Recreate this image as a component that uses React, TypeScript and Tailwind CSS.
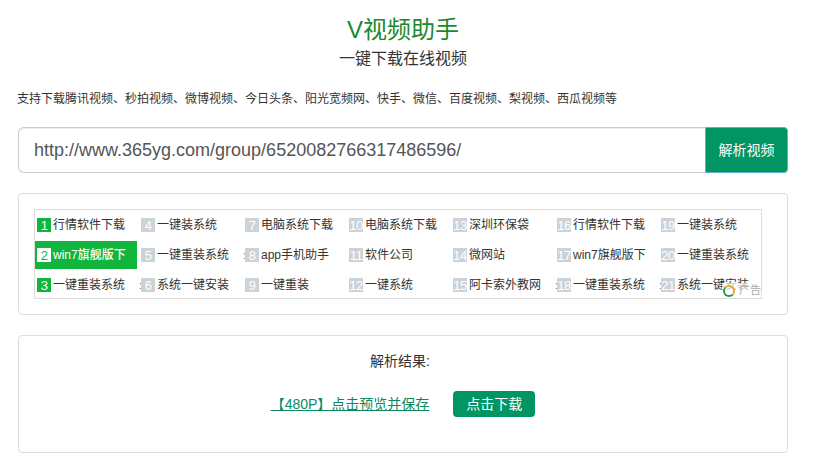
const columns = [
  [
    { n: 1, text: '行情软件下载', hot: true },
    { n: 2, text: 'win7旗舰版下', hot: true, active: true },
    { n: 3, text: '一键重装系统', hot: true, tail: true },
  ],
  [
    { n: 4, text: '一键装系统' },
    { n: 5, text: '一键重装系统', tail: true },
    { n: 6, text: '系统一键安装' },
  ],
  [
    { n: 7, text: '电脑系统下载' },
    { n: 8, text: 'app手机助手' },
    { n: 9, text: '一键重装' },
  ],
  [
    { n: 10, text: '电脑系统下载' },
    { n: 11, text: '软件公司' },
    { n: 12, text: '一键系统' },
  ],
  [
    { n: 13, text: '深圳环保袋' },
    { n: 14, text: '微网站' },
    { n: 15, text: '阿卡索外教网', tail: true },
  ],
  [
    { n: 16, text: '行情软件下载' },
    { n: 17, text: 'win7旗舰版下' },
    { n: 18, text: '一键重装系统', tail: true },
  ],
  [
    { n: 19, text: '一键装系统' },
    { n: 20, text: '一键重装系统' },
    { n: 21, text: '系统一键安装' },
  ],
];

type Item = { n: number; text: string; hot?: boolean; active?: boolean; tail?: boolean };

const AdItem = ({ item }: { item: Item }) => {
  const badge = item.active
    ? 'bg-white text-[#12b53b]'
    : item.hot
      ? 'bg-[#12b53b] text-white'
      : 'bg-[#ccd3d8] text-white';
  return (
    <div className="flex h-[30px] w-[104px] items-center py-[1px]">
      <div className={`flex h-[28px] w-[102px] shrink-0 items-center overflow-hidden pl-[2px] text-[12px] ${item.active ? 'bg-[#12b53b] text-white' : 'text-[#333]'}`}>
        <span className={`flex h-[14px] w-[14px] shrink-0 items-center justify-center text-[13px] leading-none tracking-[-0.5px] ${badge}`}>{item.n}</span>
        <span className={`ml-[2px] whitespace-nowrap ${item.active ? 'font-medium' : ''}`}>{item.text}</span>
      </div>
      {item.tail && <span className="ml-[2px] w-[2px] shrink-0 overflow-hidden text-[11px] leading-none text-[#777]">:</span>}
    </div>
  );
};

const App = () => {
  return (
    <div className="h-[464px] w-[820px] overflow-hidden bg-white pl-[18px] font-['Liberation_Sans','Noto_Sans_CJK_SC',sans-serif] text-[#333]">
      <div className="w-[770px]">
        <div className="pt-[14px] text-center">
          <h1 className="h-[32px] text-[24px] leading-[32px] font-normal text-[#1b8a2c]">V视频助手</h1>
          <p className="mt-[2px] text-[16px] leading-[22px]">一键下载在线视频</p>
        </div>
        <p className="mt-[20px] -ml-px text-[12px] leading-[18px]">支持下载腾讯视频、秒拍视频、微博视频、今日头条、阳光宽频网、快手、微信、百度视频、梨视频、西瓜视频等</p>

        <div className="mt-[19px] flex h-[46px]">
          <div className="flex flex-1 items-center rounded-l-[6px] border border-r-0 border-[#ccc] pl-[15px] text-[18px] text-[#555] shadow-[inset_0_1px_1px_rgba(0,0,0,0.075)]">
            http://www.365yg.com/group/6520082766317486596/
          </div>
          <button className="w-[83px] rounded-r-[4px] border border-[#5cb0d8] bg-[#009563] text-[14px] text-white">解析视频</button>
        </div>

        <div className="mt-[20px] h-[122px] rounded-[4px] border border-[#ddd] pt-[15px] pl-[15px]">
          <div className="relative h-[90px] w-[728px] border border-[#ddd]">
            <div className="flex">
              {columns.map((col) => (
                <div key={col[0].n} className="flex flex-col">
                  {col.map((item) => (
                    <AdItem key={item.n} item={item} />
                  ))}
                </div>
              ))}
            </div>
            <div className="absolute right-0 bottom-0 flex h-[15px] w-[39px] items-center bg-white/70 pl-[1px] text-[11px] text-[#aaa]">
              <span className="h-[12px] w-[12px] shrink-0 rounded-full border-2 border-t-[#e8a820] border-r-[#e8a820] border-b-[#2a9d4a] border-l-[#2a9d4a]" />
              <span className="ml-[4px] leading-none">广告</span>
            </div>
          </div>
        </div>

        <div className="mt-[20px] h-[118px] rounded-[4px] border border-[#ddd] text-center">
          <p className="mt-[15px] pr-[6px] text-[14px] leading-[20px]">解析结果:</p>
          <div className="mt-[20px] flex items-center justify-center">
            <a href="#" className="text-[14px] text-[#0a8a5c] underline">【480P】点击预览并保存</a>
            <button className="ml-[24px] h-[26px] w-[82px] rounded-[4px] bg-[#009563] text-[14px] text-white">点击下载</button>
          </div>
        </div>
      </div>
    </div>
  );
};

export default App;
